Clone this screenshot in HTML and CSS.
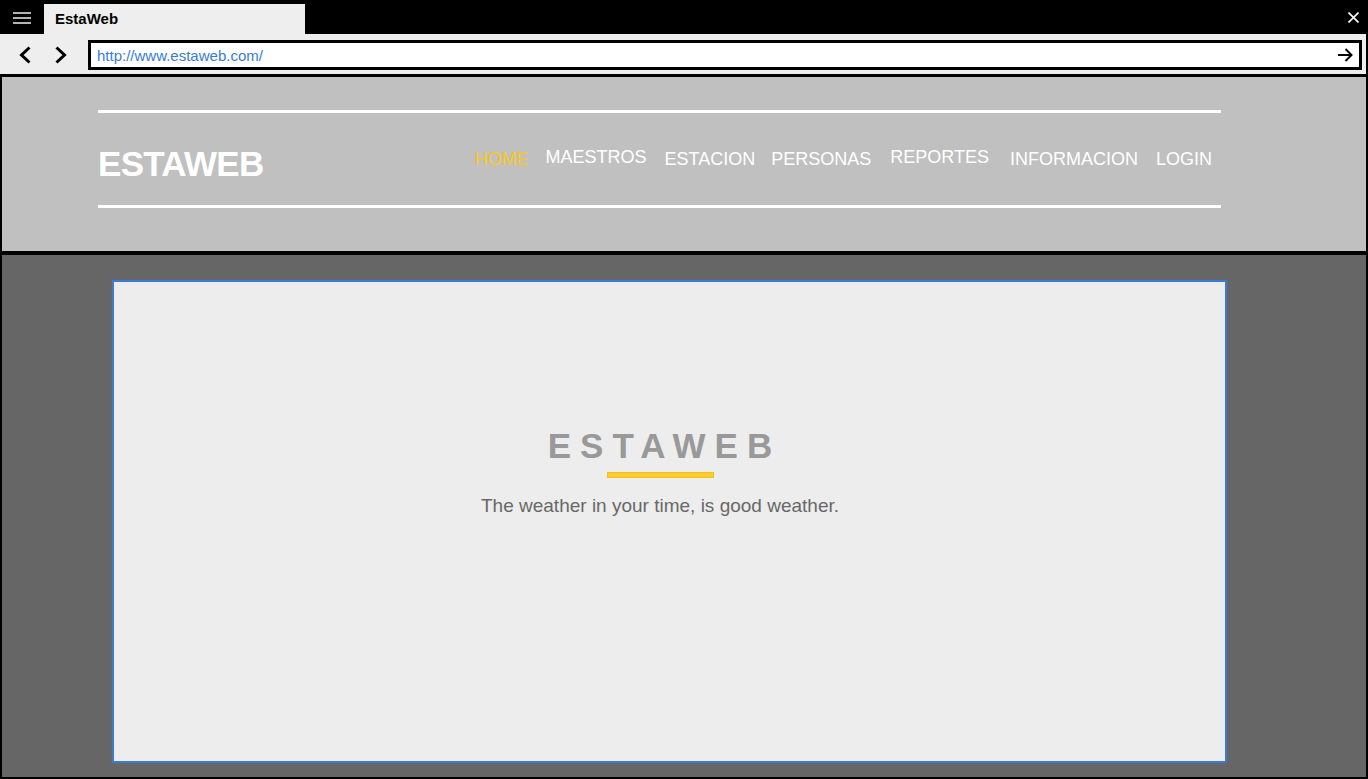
FILE: index.html
```html
<!DOCTYPE html>
<html lang="es">
<head>
<meta charset="utf-8">
<title>EstaWeb</title>
<link rel="stylesheet" href="styles.css">
</head>
<body>
<div class="titlebar">
  <div class="menu-btn">
    <svg width="18" height="12" viewBox="0 0 18 12"><rect x="0" y="0" width="18" height="2" fill="#b4b4b4"/><rect x="0" y="5" width="18" height="2" fill="#b4b4b4"/><rect x="0" y="10" width="18" height="2" fill="#b4b4b4"/></svg>
  </div>
  <div class="tab">EstaWeb</div>
  <svg class="close" width="11" height="11" viewBox="0 0 11 11"><path d="M0.5 0.5 L10.5 10.5 M10.5 0.5 L0.5 10.5" stroke="#fff" stroke-width="1.6" fill="none"/></svg>
</div>
<div class="toolbar">
  <svg class="nav-back" width="12" height="18" viewBox="0 0 12 18"><polyline points="10.5,1.5 2.5,9 10.5,16.5" fill="none" stroke="#000" stroke-width="3"/></svg>
  <svg class="nav-fwd" width="12" height="18" viewBox="0 0 12 18"><polyline points="1.5,1.5 9.5,9 1.5,16.5" fill="none" stroke="#000" stroke-width="3"/></svg>
  <div class="urlbox">
    <span class="url">http://www.estaweb.com/</span>
    <svg class="go" width="15" height="14" viewBox="0 0 15 14"><path d="M0 7 H13.5 M7.5 1 L13.5 7 L7.5 13" fill="none" stroke="#000" stroke-width="2"/></svg>
  </div>
</div>
<div class="viewport">
  <header class="site-header">
    <div class="header-inner">
      <div class="rule"></div>
      <div class="header-row">
        <div class="logo">ESTAWEB</div>
        <nav class="menu">
          <a class="item active">HOME</a>
          <a class="item raised i-maestros">MAESTROS</a>
          <a class="item">ESTACION</a>
          <a class="item i-personas">PERSONAS</a>
          <a class="item raised i-reportes">REPORTES</a>
          <a class="item i-info">INFORMACION</a>
          <a class="item">LOGIN</a>
        </nav>
      </div>
      <div class="rule"></div>
    </div>
  </header>
  <main class="site-main">
    <section class="card">
      <h1 class="hero-title">ESTAWEB</h1>
      <div class="hero-bar"></div>
      <p class="hero-sub">The weather in your time, is good weather.</p>
    </section>
  </main>
</div>
</body>
</html>
```
FILE: styles.css
```css
* { box-sizing: border-box; }
html, body { margin: 0; padding: 0; }
body {
  background: #000;
  font-family: "Liberation Sans", Arial, sans-serif;
  width: 1368px;
  height: 779px;
  overflow: hidden;
}

/* browser chrome */
.titlebar {
  height: 34px;
  display: flex;
  align-items: flex-start;
}
.menu-btn {
  width: 44px;
  height: 34px;
  display: flex;
  align-items: center;
  justify-content: center;
  padding-top: 1px;
}
.menu-btn svg { display: block; }
.tab {
  margin-top: 4px;
  width: 261px;
  height: 30px;
  background: #eeeeee;
  padding-left: 11px;
  font-size: 15px;
  font-weight: bold;
  line-height: 30px;
  color: #000;
}
.close {
  margin-left: auto;
  margin-right: 9px;
  margin-top: 12px;
  display: block;
}

.toolbar {
  height: 40px;
  margin-right: 2px;
  background: #eeeeee;
  display: flex;
  align-items: center;
}
.nav-back { margin-left: 19px; margin-top: 2px; display: block; }
.nav-fwd { margin-left: 24px; margin-top: 2px; display: block; }
.urlbox {
  margin-left: 21px;
  margin-top: 2px;
  width: 1274px;
  height: 30px;
  border: 3px solid #000;
  background: #fff;
  display: flex;
  align-items: center;
  padding-left: 6px;
  padding-right: 6px;
}
.url {
  font-size: 15px;
  color: #3a7bd5;
  flex: 1;
}
.go { display: block; }

/* page viewport */
.viewport {
  margin-top: 3px;
  margin-left: 2px;
  margin-right: 2px;
}
.site-header {
  height: 174px;
  background: #c0c0c0;
  padding-top: 33px;
}
.header-inner {
  margin-left: 96px;
  width: 1123px;
}
.rule {
  height: 3px;
  background: #fff;
}
.header-row {
  height: 92px;
  display: flex;
  align-items: flex-start;
}
.logo {
  margin-top: 31px;
  font-size: 35px;
  line-height: 40px;
  font-weight: bold;
  letter-spacing: -0.7px;
  color: #fff;
}
.menu {
  margin-left: auto;
  margin-right: 9px;
  margin-top: 34px;
  display: flex;
  align-items: flex-start;
  gap: 18px;
}
.item {
  font-size: 18px;
  line-height: 20px;
  color: #fff;
  padding-top: 2px;
  cursor: pointer;
}
.item.active { color: #f7c71c; }
.item.raised { padding-top: 0; }
.item.i-maestros { margin-left: -1px; }
.item.i-personas { margin-left: -2px; }
.item.i-reportes { margin-left: 1px; }
.item.i-info { margin-left: 3px; }

.site-main {
  margin-top: 4px;
  height: 522px;
  background: #666666;
  padding-top: 25px;
  padding-left: 110px;
}
.card {
  width: 1115px;
  height: 483px;
  border: 2px solid #3a7bd5;
  background: #ededed;
  padding-top: 144px;
  padding-right: 19px;
  display: flex;
  flex-direction: column;
  align-items: center;
}
.hero-title {
  margin: 0;
  font-size: 35px;
  line-height: 40px;
  font-weight: bold;
  letter-spacing: 9px;
  padding-left: 9px;
  color: #999999;
}
.hero-bar {
  margin-top: 6px;
  width: 107px;
  height: 6px;
  background: #ffcd2e;
  border: 1px solid #f0c01e;
}
.hero-sub {
  margin: 17px 0 0;
  font-size: 19px;
  line-height: 22px;
  color: #686868;
}
```
